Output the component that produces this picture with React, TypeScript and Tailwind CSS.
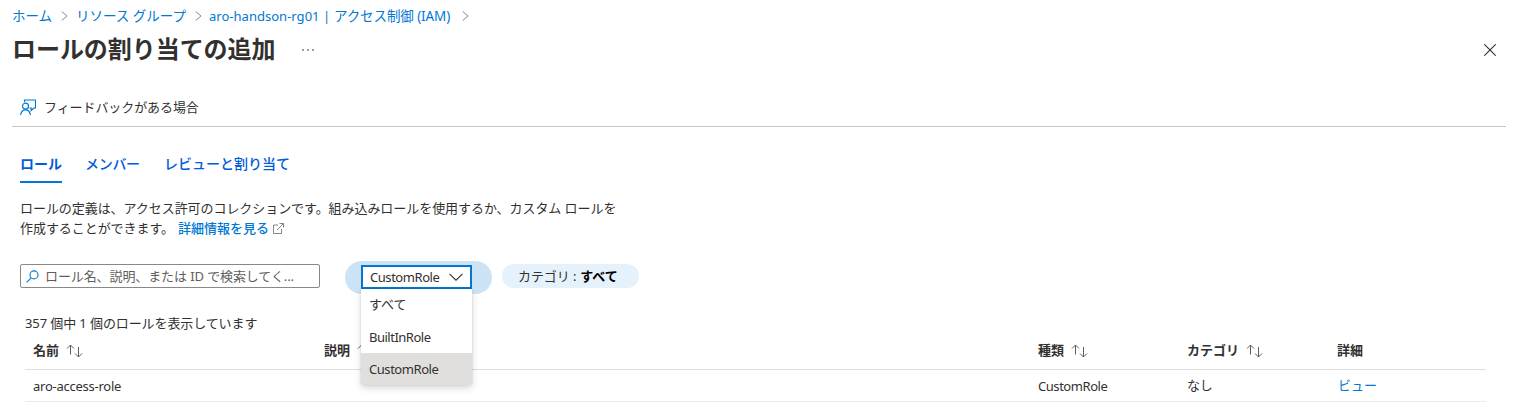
import React from 'react';

function Crumb() {
  return (
    <svg className="h-[10px] w-[7px] shrink-0" viewBox="0 0 7 10" fill="none" stroke="#8a8886" strokeWidth="1">
      <path d="M0.7 0.5 6 5 0.7 9.5" />
    </svg>
  );
}

function SortIcon() {
  return (
    <svg className="mt-px h-[14px] w-[17px] shrink-0" viewBox="0 0 17 14" fill="none" stroke="#605e5c" strokeWidth="1">
      <path d="M4.500 10.500V1M1 4.500 4.500 1l3.500 3.500M12.500 3v10M9 9.500l3.500 3.500 3.500-3.500" />
    </svg>
  );
}

function FeedbackIcon() {
  return (
    <svg className="h-[17px] w-[16px] shrink-0" viewBox="0 0 16 17" fill="none" stroke="#0078d4" strokeWidth="1.2">
      <path d="M4.500 3V1h11v8h-1.700l-2.600 2.500V9H9.500" />
      <circle cx="5.500" cy="7.200" r="3" />
      <path d="M0.600 16c.4-3.200 2.300-5.200 4.900-5.200s4.500 2 4.900 5.200" />
    </svg>
  );
}

function SearchIcon() {
  return (
    <svg className="h-[13px] w-[13px] shrink-0" viewBox="0 0 13 13" fill="none" stroke="#0078d4" strokeWidth="1.1">
      <circle cx="8" cy="4.900" r="4" />
      <path d="M5.200 7.800 0.600 12.300" />
    </svg>
  );
}

function ExternalIcon() {
  return (
    <svg className="h-[11px] w-[11px] shrink-0" viewBox="0 0 11 11" fill="none" stroke="#797775" strokeWidth="0.9">
      <path d="M5 2H0.500v8.500H8.500V6M6.500 0.500h4v4M10.500 0.500 4 7" />
    </svg>
  );
}

const options = ['すべて', 'BuiltInRole', 'CustomRole'];
const grid = 'grid grid-cols-[291px_714px_149px_150px_1fr] pl-2';

export default function App() {
  return (
    <div className="h-[419px] w-[1518px] overflow-hidden bg-white font-['Noto_Sans','Noto_Sans_CJK_JP',sans-serif] text-[13px] leading-5 whitespace-nowrap text-[#323130]">
      <nav className="flex h-8 items-center pl-3 text-[#0078d4]">
        <a className="w-[49px] text-[13.5px]">ホーム</a>
        <Crumb />
        <a className="ml-2 w-[111px] text-[13.5px]">リソース グループ</a>
        <span className="ml-2 flex"><Crumb /></span>
        <a className="ml-[7px] flex w-[253px] items-center">
          <span className="w-[125px] tracking-[0.02px]">aro-handson-rg01 |</span>
          <span className="text-[13.5px] tracking-[-0.1px]">アクセス制御 (IAM)</span>
        </a>
        <Crumb />
      </nav>

      <header className="flex h-[35px] items-center pr-[22px] pl-3">
        <h1 className="-mt-[2px] w-[290px] text-[24px] leading-8 font-bold tracking-[-0.05px]">ロールの割り当ての追加</h1>
        <span className="flex gap-[3px]">
          <i className="size-[2px] bg-[#a19f9d]" />
          <i className="size-[2px] bg-[#a19f9d]" />
          <i className="size-[2px] bg-[#a19f9d]" />
        </span>
        <svg className="ml-auto size-[12px]" viewBox="0 0 12 12" stroke="#323130" strokeWidth="1.1">
          <path d="M0.300 0.300 11.700 11.700M11.700 0.300 0.300 11.700" />
        </svg>
      </header>

      <div className="mx-3 mt-[21px] flex h-[39px] items-center gap-2 border-b border-[#c8c6c4] pl-2">
        <FeedbackIcon />
        <span className="tracking-[-0.08px]">フィードバックがある場合</span>
      </div>

      <div className="mt-[21px] flex h-[35px] gap-6 pl-5 text-[14px] text-[#015cda]">
        <span className="h-[35px] w-[42px] border-b-2 border-[#0078d4] pt-[6px] font-bold">ロール</span>
        <span className="-ml-px w-[55px] pt-[6px] font-medium tracking-[-0.3px]">メンバー</span>
        <span className="pt-[6px] font-medium">レビューと割り当て</span>
      </div>

      <div className="mt-[15px] pl-5">
        <p className="tracking-[-0.06px]">ロールの定義は、アクセス許可のコレクションです。組み込みロールを使用するか、カスタム ロールを</p>
        <p className="flex items-center">
          <span className="w-[156px] tracking-[-0.06px]">作成することができます。</span>
          <a className="mr-1 ml-[2px] font-medium text-[#0078d4]">詳細情報を見る</a>
          <ExternalIcon />
        </p>
      </div>

      <div className="mt-[23px] flex h-[33px] pl-5">
        <div className="mt-[3px] flex h-6 w-[300px] items-center gap-[6px] rounded-[2px] border border-[#8a8886] pl-[5px] text-[#605e5c]">
          <SearchIcon />
          <span className="tracking-[-0.1px]">ロール名、説明、または ID で検索してく...</span>
        </div>
        <div className="ml-[25px] h-[33px] w-[147px] rounded-full bg-[#cce3f5] pt-1 pl-4">
          <div className="relative w-[111px]">
            <div className="flex h-6 items-center justify-between border-2 border-[#0078d4] bg-white pr-[7px] pl-[7px]">
              <span className="tracking-[-0.45px]">CustomRole</span>
              <svg className="h-[8px] w-[14px]" viewBox="0 0 14 8" fill="none" stroke="#323130" strokeWidth="1.1">
                <path d="M0.500 0.800 7 7.200 13.500 0.800" />
              </svg>
            </div>
            <ul className="absolute top-6 left-0 z-10 w-[111px] rounded-b-[2px] bg-white shadow-[0_3px_7px_rgba(0,0,0,0.16),0_0_2px_rgba(0,0,0,0.14)]">
              {options.map((o) => (
                <li
                  key={o}
                  className={
                    o === 'CustomRole'
                      ? 'flex h-8 items-center rounded-b-[2px] bg-[#e1dfdd] pl-2 tracking-[-0.45px]'
                      : o === 'BuiltInRole'
                        ? 'flex h-8 items-center pl-2 tracking-[-0.5px]'
                        : 'flex h-8 items-center pb-[2px] pl-2'
                  }
                >
                  {o}
                </li>
              ))}
            </ul>
          </div>
        </div>
        <div className="mt-[3px] ml-[10px] flex h-6 w-[137px] items-center gap-1 rounded-full bg-[#e5f1fb] pb-px pl-4">
          <span className="tracking-[-0.1px]">カテゴリ :</span>
          <b className="text-black">すべて</b>
        </div>
      </div>

      <div className="mt-[19px] mr-8 ml-[25px]">
        <div className="h-5 tracking-[-0.1px]">357 個中 1 個のロールを表示しています</div>
        <div className={`${grid} h-[37px] border-b border-[#e1dfdd] pt-[7px] font-bold`}>
          <div className="flex h-5 items-center gap-[7px]">名前 <SortIcon /></div>
          <div className="flex h-5 items-center gap-[7px]">説明 <SortIcon /></div>
          <div className="flex h-5 items-center gap-[7px]">種類 <SortIcon /></div>
          <div className="flex h-5 items-center gap-[7px]">カテゴリ <SortIcon /></div>
          <div>詳細</div>
        </div>
        <div className={`${grid} h-8 border-b border-[#edebe9] pt-[6px]`}>
          <div className="tracking-[-0.25px]">aro-access-role</div>
          <div />
          <div className="tracking-[-0.45px]">CustomRole</div>
          <div className="-mt-px tracking-[-0.2px]">なし</div>
          <a className="-mt-px ml-px text-[#0078d4]">ビュー</a>
        </div>
      </div>
    </div>
  );
}
